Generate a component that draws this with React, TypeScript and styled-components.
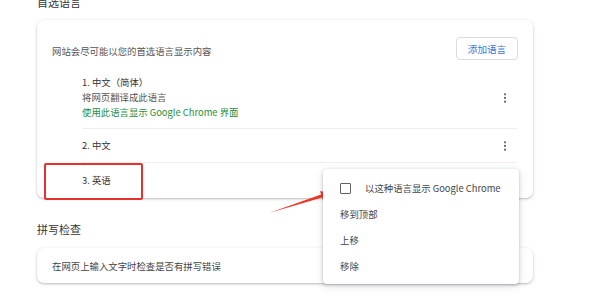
import styled, { createGlobalStyle } from 'styled-components';

const GlobalStyle = createGlobalStyle`
  html, body {
    margin: 0;
    padding: 0;
    background: #ffffff;
  }
  body {
    font-family: "Noto Sans CJK SC", "Noto Sans", "Liberation Sans", sans-serif;
    color: #333333;
    overflow: hidden;
  }
`;

export default function App() {
  return (
    <>
      <GlobalStyle />
      <Page>
        <SectionTitle>首选语言</SectionTitle>
        <Card>
          <CardHeader>
            <Description>网站会尽可能以您的首选语言显示内容</Description>
            <AddButton>添加语言</AddButton>
          </CardHeader>
          <LanguageList>
            <LanguageRow $height={61}>
              <LanguageInfo>
                <LanguageName>1. 中文（简体）</LanguageName>
                <LanguageNote>将网页翻译成此语言</LanguageNote>
                <LanguageNote $green>使用此语言显示 Google Chrome 界面</LanguageNote>
              </LanguageInfo>
              <Kebab />
            </LanguageRow>
            <LanguageRow $height={33}>
              <LanguageInfo>
                <LanguageName>2. 中文</LanguageName>
              </LanguageInfo>
              <Kebab />
            </LanguageRow>
            <LanguageRow $height={35} $last>
              <LanguageInfo>
                <LanguageName>3. 英语</LanguageName>
              </LanguageInfo>
            </LanguageRow>
          </LanguageList>
        </Card>

        <SectionTitle $spaced>拼写检查</SectionTitle>
        <Card>
          <SimpleRow>在网页上输入文字时检查是否有拼写错误</SimpleRow>
        </Card>

        <Highlight />
        <Arrow viewBox="0 0 600 300">
          <polygon
            points="269,213 321.1,194.6 320.1,191.2 334.5,192 323.1,200.8 322.1,197.4"
            fill="#ef3526"
          />
        </Arrow>

        <Menu>
          <MenuItem>
            <Checkbox />
            <span>以这种语言显示 Google Chrome</span>
          </MenuItem>
          <MenuItem>移到顶部</MenuItem>
          <MenuItem>上移</MenuItem>
          <MenuItem>移除</MenuItem>
        </Menu>
      </Page>
    </>
  );
}

function Kebab() {
  return (
    <KebabIcon viewBox="0 0 12 12">
      <circle cx="6" cy="2.3" r="1.1" />
      <circle cx="6" cy="5.9" r="1.1" />
      <circle cx="6" cy="9.7" r="1.1" />
    </KebabIcon>
  );
}

const Page = styled.div`
  position: relative;
  display: flow-root;
  width: 600px;
  height: 300px;
  padding: 0 67px 0 37px;
  box-sizing: border-box;
`;

const SectionTitle = styled.div<{ $spaced?: boolean }>`
  font-size: 11px;
  line-height: 16px;
  color: #333333;
  margin-top: ${(p) => (p.$spaced ? '23px' : '-6px')};
  margin-bottom: ${(p) => (p.$spaced ? '11px' : '10px')};
`;

const Card = styled.div`
  background: #ffffff;
  border-radius: 7px;
  box-shadow: 0 1px 2px rgba(60, 64, 67, 0.25), 0 1px 4px rgba(60, 64, 67, 0.12);
`;

const CardHeader = styled.div`
  display: flex;
  align-items: center;
  justify-content: space-between;
  padding: 17px 15px 0 15px;
`;

const Description = styled.div`
  font-size: 9.4px;
  line-height: 15px;
  color: #555555;
  margin-top: 6px;
`;

const AddButton = styled.button`
  font-family: inherit;
  font-size: 9.6px;
  color: #3c78d8;
  background: #ffffff;
  border: 1px solid #dadce0;
  border-radius: 4px;
  width: 62px;
  height: 23px;
  padding: 0;
`;

const LanguageList = styled.div`
  padding: 7px 16px 0 45px;
`;

const LanguageRow = styled.div<{ $height: number; $last?: boolean }>`
  display: flex;
  align-items: center;
  justify-content: space-between;
  height: ${(p) => p.$height}px;
  border-bottom: ${(p) => (p.$last ? 'none' : '1px solid #eeeeee')};
`;

const LanguageInfo = styled.div`
  display: flex;
  flex-direction: column;
`;

const LanguageName = styled.div`
  font-size: 9.4px;
  line-height: 15px;
  color: #333333;
`;

const LanguageNote = styled.div<{ $green?: boolean }>`
  font-size: 9.4px;
  line-height: 15px;
  color: ${(p) => (p.$green ? '#1e8e3e' : '#555555')};
`;

const KebabIcon = styled.svg`
  width: 12px;
  height: 12px;
  fill: #5f6368;
  margin-right: 6px;
`;

const SimpleRow = styled.div`
  height: 35px;
  display: flex;
  align-items: center;
  padding-left: 15px;
  font-size: 9.4px;
  color: #444444;
`;

const Highlight = styled.div`
  position: absolute;
  left: 44px;
  top: 163px;
  width: 95px;
  height: 33px;
  border: 2px solid #e5322d;
  border-radius: 2px;
`;

const Arrow = styled.svg`
  position: absolute;
  left: 0;
  top: 0;
  width: 600px;
  height: 300px;
  pointer-events: none;
`;

const Menu = styled.div`
  position: absolute;
  left: 323px;
  top: 169px;
  width: 196px;
  padding: 6px 0 5px 0;
  background: #ffffff;
  border-radius: 4px;
  box-shadow: 0 1px 3px rgba(60, 64, 67, 0.3), 0 2px 8px rgba(60, 64, 67, 0.15);
`;

const MenuItem = styled.div`
  display: flex;
  align-items: center;
  gap: 14px;
  height: 26px;
  padding-left: 17px;
  font-size: 9.4px;
  color: #444444;
`;

const Checkbox = styled.span`
  width: 9px;
  height: 9px;
  border: 1.5px solid #5f6368;
  border-radius: 1px;
`;
